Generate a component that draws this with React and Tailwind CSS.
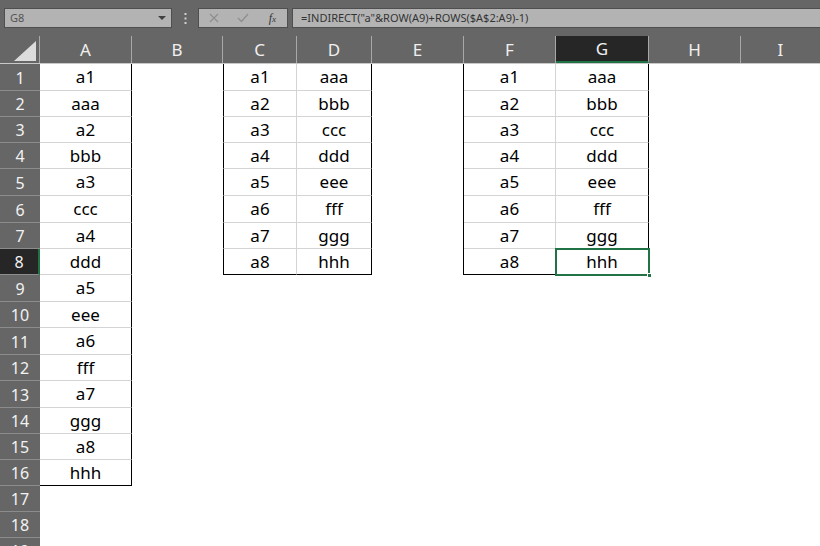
import React from 'react';

const cols = [
  { k: 'A', w: 92 },
  { k: 'B', w: 91 },
  { k: 'C', w: 74 },
  { k: 'D', w: 75 },
  { k: 'E', w: 92 },
  { k: 'F', w: 92 },
  { k: 'G', w: 93 },
  { k: 'H', w: 92 },
  { k: 'I', w: 80 },
];

const rowHeights = [27, 26, 26, 26, 27, 27, 26, 26, 27, 26, 27, 26, 27, 26, 26, 26, 26, 26, 26];

const colA = ['a1', 'aaa', 'a2', 'bbb', 'a3', 'ccc', 'a4', 'ddd', 'a5', 'eee', 'a6', 'fff', 'a7', 'ggg', 'a8', 'hhh'];
const keys = ['a1', 'a2', 'a3', 'a4', 'a5', 'a6', 'a7', 'a8'];
const vals = ['aaa', 'bbb', 'ccc', 'ddd', 'eee', 'fff', 'ggg', 'hhh'];

const Cell = ({ w, className = '', children }) => (
  <div
    className={`box-border flex h-full shrink-0 items-center justify-center ${className}`}
    style={{ width: w }}
  >
    {children}
  </div>
);

const Row = ({ i, h }) => {
  const n = i + 1;
  const sel = n === 8;
  const inSmall = n <= 8;
  const lastSmall = n === 8;
  const inA = n <= 16;
  const smallB = lastSmall ? 'border-b border-b-black' : 'border-b border-b-[#d4d4d4]';
  return (
    <div className="flex" style={{ height: h }}>
      <div
        className={`box-border flex w-[40px] shrink-0 items-center justify-center border-b border-b-[#8c8c8c] pt-[1px] text-[16px] text-[#f2f2f2] ${
          sel ? 'border-r-2 border-r-[#217346] bg-[#262626]' : 'bg-[#666666]'
        }`}
      >
        {n}
      </div>
      {/* A */}
      <Cell
        w={92}
        className={
          inA
            ? `border-r border-r-black border-b ${n === 16 ? 'border-b-black' : 'border-b-[#d4d4d4]'}`
            : ''
        }
      >
        {inA ? colA[i] : ''}
      </Cell>
      {/* B */}
      <Cell w={91} />
      {/* C */}
      <Cell w={74} className={inSmall ? `border-l border-l-black border-r border-r-[#d4d4d4] ${smallB}` : ''}>
        {inSmall ? keys[i] : ''}
      </Cell>
      {/* D */}
      <Cell w={75} className={inSmall ? `border-r border-r-black ${smallB}` : ''}>
        {inSmall ? vals[i] : ''}
      </Cell>
      {/* E */}
      <Cell w={92} className={inSmall ? 'border-r border-r-black' : ''} />
      {/* F */}
      <Cell w={92} className={inSmall ? `border-r border-r-[#d4d4d4] ${smallB}` : ''}>
        {inSmall ? keys[i] : ''}
      </Cell>
      {/* G */}
      <div className="relative h-full w-[93px] shrink-0">
        <Cell w={93} className={inSmall ? `border-r border-r-black ${smallB}` : ''}>
          {inSmall ? vals[i] : ''}
        </Cell>
        {sel && (
          <>
            <div className="absolute -left-[1px] -top-[1px] h-[28px] w-[95px] border-2 border-[#217346]" />
            <div className="absolute -bottom-[3px] -right-[3px] h-[5px] w-[5px] border border-white bg-[#217346]" />
          </>
        )}
      </div>
      <Cell w={92} />
      <Cell w={80} />
    </div>
  );
};

export default function App() {
  return (
    <div
      className="h-[546px] w-[820px] overflow-hidden bg-white"
      style={{ fontFamily: '"Noto Sans", "Open Sans", sans-serif' }}
    >
      {/* formula bar */}
      <div className="flex h-[36px] items-start bg-[#666666] pt-[8px]">
        <div className="ml-[4px] flex h-[20px] w-[168px] items-center justify-between border border-[#4f4f4f] bg-[#b3b3b3] pl-[5px] pr-[5px] text-[11px] text-[#555555]">
          <span>G8</span>
          <svg width="8" height="5" viewBox="0 0 8 5">
            <path d="M0 0 L8 0 L4 4 Z" fill="#404040" />
          </svg>
        </div>
        <div className="flex h-[20px] w-[26px] items-center justify-center">
          <svg width="3" height="11" viewBox="0 0 3 11">
            <rect x="0.5" y="0" width="2" height="2" fill="#d0d0d0" />
            <rect x="0.5" y="4.5" width="2" height="2" fill="#d0d0d0" />
            <rect x="0.5" y="9" width="2" height="2" fill="#d0d0d0" />
          </svg>
        </div>
        <div className="flex h-[20px] w-[90px] items-center border border-[#4f4f4f] bg-[#b3b3b3]">
          <div className="flex w-[30px] justify-center">
            <svg width="10" height="10" viewBox="0 0 10 10">
              <path d="M1 1 L9 9 M9 1 L1 9" stroke="#8e8e8e" strokeWidth="1.2" />
            </svg>
          </div>
          <div className="flex w-[30px] justify-center">
            <svg width="12" height="10" viewBox="0 0 12 10">
              <path d="M1 5 L4.5 8.5 L11 1" stroke="#8e8e8e" strokeWidth="1.2" fill="none" />
            </svg>
          </div>
          <div
            className="flex w-[30px] justify-center text-[12px] italic text-[#333333]"
            style={{ fontFamily: '"Liberation Serif", serif' }}
          >
            <span>
              f<span className="text-[9px]">x</span>
            </span>
          </div>
        </div>
        <div className="ml-[4px] flex h-[20px] flex-1 items-center border border-r-0 border-[#4f4f4f] bg-[#b3b3b3] pl-[8px] text-[11px] text-[#333333]">
          =INDIRECT("a"&amp;ROW(A9)+ROWS($A$2:A9)-1)
        </div>
      </div>
      {/* column headers */}
      <div className="flex h-[28px] border-b border-b-[#c8c8c8] bg-[#666666]">
        <div className="relative w-[40px] shrink-0 border-r border-r-[#a8a8a8]">
          <svg className="absolute bottom-[2px] right-[3px]" width="22" height="20" viewBox="0 0 22 20">
            <path d="M22 0 L22 20 L0 20 Z" fill="#dcdcdc" />
          </svg>
        </div>
        {cols.map((c) => (
          <div
            key={c.k}
            className={`box-border flex shrink-0 items-center justify-center border-r pt-[1px] text-[17px] text-[#f0f0f0] ${
              c.k === 'G'
                ? 'border-r-[#a8a8a8] border-b-2 border-b-[#217346] bg-[#262626]'
                : 'border-r-[#a8a8a8]'
            }`}
            style={{ width: c.w }}
          >
            {c.k}
          </div>
        ))}
      </div>
      {/* rows */}
      <div className="text-[17px] text-black">
        {rowHeights.map((h, i) => (
          <Row key={i} i={i} h={h} />
        ))}
      </div>
    </div>
  );
}
